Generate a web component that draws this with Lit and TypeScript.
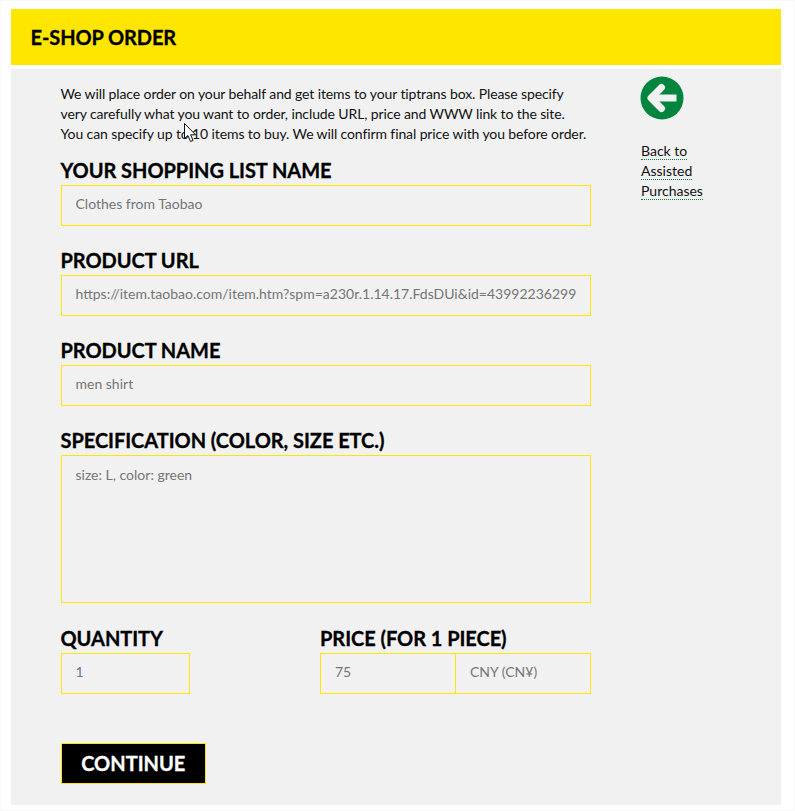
import { LitElement, html, css } from "lit";
import { customElement } from "lit/decorators.js";

@customElement("app-root")
export class AppRoot extends LitElement {
  static styles = css`
    :host {
      display: block;
      position: relative;
      height: 811px;
      overflow: hidden;
      background: #fff;
      box-shadow: inset 0 0 0 1px #f8f8f8;
      font-family: Lato, "Liberation Sans", sans-serif;
      color: #111;
    }
    .page {
      padding: 9px 14px 0 11px;
    }
    .head {
      background: #ffe600;
      height: 56px;
      display: flex;
      align-items: center;
      padding: 0 0 1px 19.5px;
      box-sizing: border-box;
      margin-bottom: 4px;
    }
    h1 {
      margin: 0;
      font-size: 20px;
      font-weight: 700;
      color: #000;
      letter-spacing: -0.1px;
      -webkit-text-stroke: 0.3px #000;
    }
    .panel {
      background: #f1f1f1;
      height: 736px;
      box-sizing: border-box;
      padding: 15px 0 0 49.5px;
      display: flex;
      gap: 49px;
    }
    .main {
      width: 530.5px;
    }
    p {
      margin: 0 0 16px;
      font-size: 14px;
      line-height: 20px;
      letter-spacing: -0.11px;
      white-space: nowrap;
    }
    .lab {
      display: block;
      height: 25px;
      line-height: 21px;
      font-size: 20px;
      font-weight: 700;
      color: #000;
      letter-spacing: -0.05px;
      white-space: nowrap;
      -webkit-text-stroke: 0.3px #000;
    }
    input,
    textarea {
      display: block;
      box-sizing: border-box;
      width: 100%;
      height: 41px;
      margin: 0;
      padding: 0 14px 4px;
      border: 1px solid #ffe600;
      border-radius: 0;
      background: #f1f1f1;
      font: 14px Lato, "Liberation Sans", sans-serif;
      outline: none;
    }
    input::placeholder,
    textarea::placeholder {
      color: #757575;
      opacity: 1;
    }
    textarea {
      height: 148px;
      padding-top: 9px;
      line-height: 20px;
      resize: none;
    }
    .field {
      margin-bottom: 24px;
    }
    .field:has(textarea) {
      margin-bottom: 0;
    }
    .bottom {
      display: flex;
      gap: 130px;
      margin: 25px 0 49px;
    }
    .qty {
      width: 129.5px;
    }
    .price {
      width: 271px;
    }
    .pair {
      display: flex;
    }
    .pair input {
      width: 136px;
    }
    .pair input + input {
      width: 136px;
      margin-left: -1px;
    }
    .go {
      display: block;
      box-sizing: border-box;
      width: 145.5px;
      height: 41px;
      padding: 0 0 1px;
      background: #000;
      border: 1px solid #ffe600;
      color: #fff;
      font: 700 20px Lato, "Liberation Sans", sans-serif;
      -webkit-text-stroke: 0.3px #fff;
    }
    .side {
      font-size: 14px;
    }
    .back {
      display: block;
      width: 44px;
      height: 44px;
      margin: -8px 0 21px;
    }
    .links {
      line-height: 20px;
      width: 90px;
      margin-left: 1px;
    }
    .links a {
      color: #111;
      text-decoration: none;
      border-bottom: 1px dotted #00853e;
    }
    .cursor {
      position: absolute;
      left: 184px;
      top: 123px;
    }
  `;

  render() {
    return html`
      <div class="page">
        <div class="head"><h1>E-SHOP ORDER</h1></div>
        <div class="panel">
          <div class="main">
            <p>
              We will place order on your behalf and get items to your tiptrans box. Please specify<br />
              very carefully what you want to order, include URL, price and WWW link to the site.<br />
              You can specify up to 10 items to buy. We will confirm final price with you before order.
            </p>
            <div class="field">
              <label class="lab">YOUR SHOPPING LIST NAME</label>
              <input placeholder="Clothes from Taobao" />
            </div>
            <div class="field">
              <label class="lab">PRODUCT URL</label>
              <input placeholder="https://item.taobao.com/item.htm?spm=a230r.1.14.17.FdsDUi&id=43992236299&ns=1" />
            </div>
            <div class="field">
              <label class="lab">PRODUCT NAME</label>
              <input placeholder="men shirt" />
            </div>
            <div class="field">
              <label class="lab">SPECIFICATION (COLOR, SIZE ETC.)</label>
              <textarea placeholder="size: L, color: green"></textarea>
            </div>
            <div class="bottom">
              <div class="qty">
                <label class="lab">QUANTITY</label>
                <input placeholder="1" />
              </div>
              <div class="price">
                <label class="lab">PRICE (FOR 1 PIECE)</label>
                <div class="pair">
                  <input placeholder="75" />
                  <input placeholder="CNY (CN¥)" />
                </div>
              </div>
            </div>
            <button class="go">CONTINUE</button>
          </div>
          <div class="side">
            <svg class="back" viewBox="0 0 44 44">
              <circle cx="22" cy="22" r="21.5" fill="#00853e" />
              <path
                d="M21.5 11.5 L11 22 L21.5 32.5"
                fill="none"
                stroke="#f1f1f1"
                stroke-width="7"
                stroke-linecap="round"
                stroke-linejoin="round"
              />
              <path d="M12 22 H36.5" fill="none" stroke="#f1f1f1" stroke-width="7" />
            </svg>
            <div class="links">
              <a href="#">Back to</a><br />
              <a href="#">Assisted</a><br />
              <a href="#">Purchases</a>
            </div>
          </div>
        </div>
      </div>
      <svg class="cursor" width="13" height="20" viewBox="0 0 13 20">
        <path
          d="M.5.5V15.5L4 12.5L6.5 18.5L9 17.5L6.7 11.8H11.5Z"
          fill="#fff"
          stroke="#111"
          stroke-width="1"
        />
      </svg>
    `;
  }
}
